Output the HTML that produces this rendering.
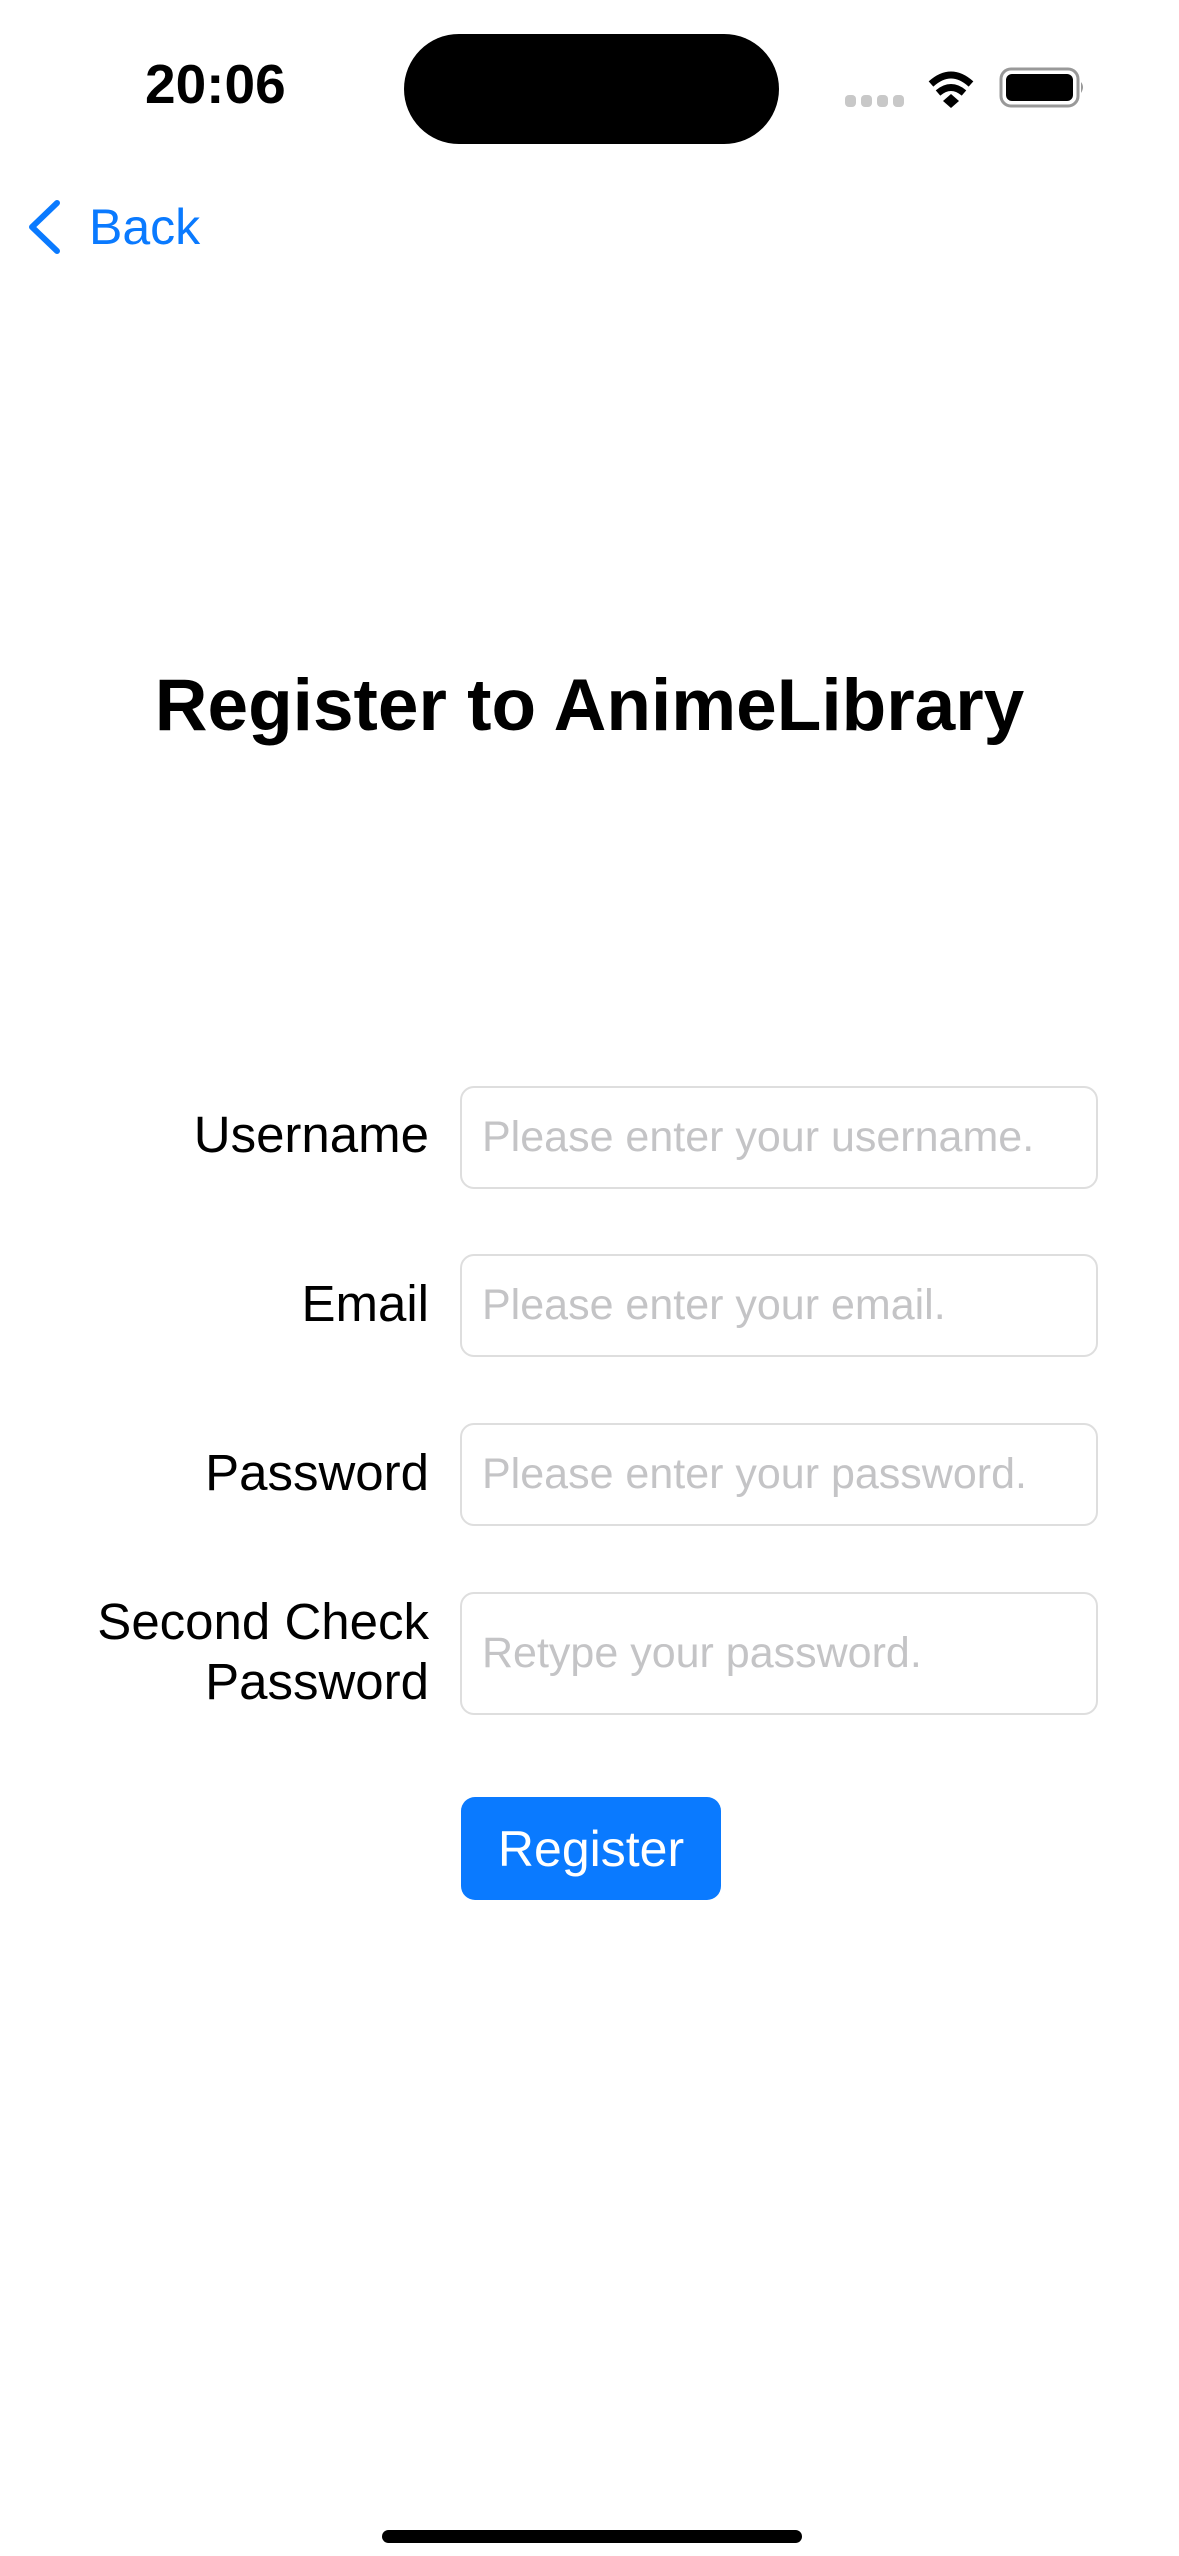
<!DOCTYPE html>
<html><head><meta charset="utf-8"><style>
*{margin:0;padding:0;box-sizing:border-box}
body{width:1179px;height:2556px;background:#fff;position:relative;overflow:hidden;font-family:"Liberation Sans",sans-serif}
.a{position:absolute}
.lbl{position:absolute;right:750px;font-size:51px;color:#000;text-align:right;line-height:60px}
.fld{position:absolute;left:460px;width:638px;border:2px solid #dedede;border-radius:14px;font-size:43px;color:#c4c4c6;padding-left:20px;display:flex;align-items:center}
</style></head><body>
<div class="a" style="left:145px;top:52px;font-size:55px;font-weight:bold">20:06</div>
<div class="a" style="left:404px;top:34px;width:375px;height:110px;background:#000;border-radius:55px"></div>
<svg class="a" style="left:840px;top:60px" width="260" height="60" viewBox="840 60 260 60">
<g fill="#c8c8c8"><rect x="845" y="95" width="11" height="12" rx="4"/><rect x="861" y="95" width="11" height="12" rx="4"/><rect x="877" y="95" width="11" height="12" rx="4"/><rect x="893" y="95" width="11" height="12" rx="4"/></g>
<g fill="none" stroke="#000" stroke-width="7"><path d="M931 84 Q951 66 971 84"/><path d="M938 93 Q951 82 964 93"/></g>
<path d="M943 101 L951 94 L959 101 L951 108Z" fill="#000"/>
<rect x="1001" y="69" width="77" height="37" rx="10" fill="none" stroke="#999" stroke-width="3"/>
<rect x="1006" y="74" width="67" height="27" rx="6" fill="#000"/>
<path d="M1081 82 Q1085 87 1081 93Z" fill="#999"/>
</svg>
<svg class="a" style="left:24px;top:198px" width="40" height="60"><path d="M33 5 L8 29 L33 53" fill="none" stroke="#0a7aff" stroke-width="6" stroke-linecap="round" stroke-linejoin="round"/></svg>
<div class="a" style="left:89px;top:198px;font-size:50px;color:#0a7aff">Back</div>
<div class="a" style="left:0;width:1179px;top:664px;text-align:center;font-size:73px;font-weight:bold">Register to AnimeLibrary</div>
<div class="lbl" style="top:1105px">Username</div>
<div class="fld" style="top:1086px;height:103px">Please enter your username.</div>
<div class="lbl" style="top:1274px">Email</div>
<div class="fld" style="top:1254px;height:103px">Please enter your email.</div>
<div class="lbl" style="top:1443px">Password</div>
<div class="fld" style="top:1423px;height:103px">Please enter your password.</div>
<div class="lbl" style="top:1592px">Second Check<br>Password</div>
<div class="fld" style="top:1592px;height:123px">Retype your password.</div>
<div class="a" style="left:461px;top:1797px;width:260px;height:103px;background:#0a7aff;border-radius:14px;color:#fff;font-size:50px;display:flex;align-items:center;justify-content:center">Register</div>
<div class="a" style="left:382px;top:2530px;width:420px;height:13px;background:#000;border-radius:7px"></div>
</body></html>
